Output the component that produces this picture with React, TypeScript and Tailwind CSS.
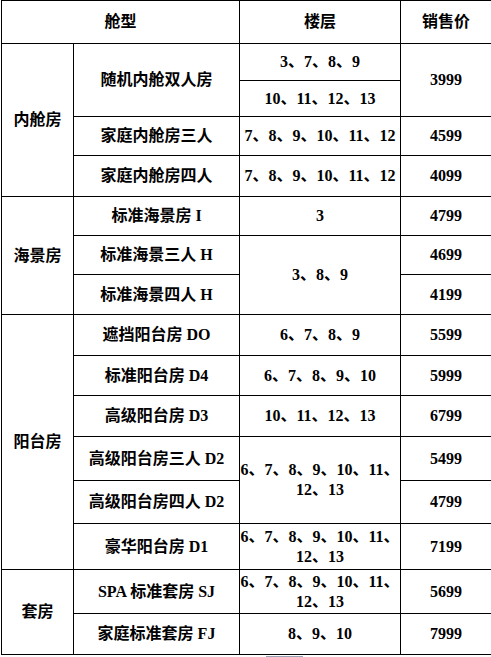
import React from 'react';

const font = { fontFamily: '"Liberation Serif", "Noto Sans CJK SC", serif' };

const td = 'border border-black text-center align-middle p-0 font-bold text-[16px] leading-[20px] text-black';

export default function App() {
  return (
    <div className="bg-white w-[491px] h-[657px] overflow-hidden" style={font}>
      <table className="border-collapse table-fixed w-[490px] ml-[1px]">
        <colgroup>
          <col className="w-[72px]" />
          <col className="w-[166px]" />
          <col className="w-[161px]" />
          <col className="w-[91px]" />
        </colgroup>
        <tbody>
          <tr className="h-[43px]">
            <td className={td} colSpan={2}>舱型</td>
            <td className={td}>楼层</td>
            <td className={td}>销售价</td>
          </tr>

          {/* 内舱房 */}
          <tr className="h-[37px]">
            <td className={td} rowSpan={4}>内舱房</td>
            <td className={td} rowSpan={2}>随机内舱双人房</td>
            <td className={td}>3、7、8、9</td>
            <td className={td} rowSpan={2}>3999</td>
          </tr>
          <tr className="h-[36px]">
            <td className={td}>10、11、12、13</td>
          </tr>
          <tr className="h-[39px]">
            <td className={td}>家庭内舱房三人</td>
            <td className={td}>7、8、9、10、11、12</td>
            <td className={td}>4599</td>
          </tr>
          <tr className="h-[41px]">
            <td className={td}>家庭内舱房四人</td>
            <td className={td}>7、8、9、10、11、12</td>
            <td className={td}>4099</td>
          </tr>

          {/* 海景房 */}
          <tr className="h-[39px]">
            <td className={td} rowSpan={3}>海景房</td>
            <td className={td}>标准海景房 I</td>
            <td className={td}>3</td>
            <td className={td}>4799</td>
          </tr>
          <tr className="h-[39px]">
            <td className={td}>标准海景三人 H</td>
            <td className={td} rowSpan={2}>3、8、9</td>
            <td className={td}>4699</td>
          </tr>
          <tr className="h-[40px]">
            <td className={td}>标准海景四人 H</td>
            <td className={td}>4199</td>
          </tr>

          {/* 阳台房 */}
          <tr className="h-[41px]">
            <td className={td} rowSpan={6}>阳台房</td>
            <td className={td}>遮挡阳台房 DO</td>
            <td className={td}>6、7、8、9</td>
            <td className={td}>5599</td>
          </tr>
          <tr className="h-[40px]">
            <td className={td}>标准阳台房 D4</td>
            <td className={td}>6、7、8、9、10</td>
            <td className={td}>5999</td>
          </tr>
          <tr className="h-[41px]">
            <td className={td}>高级阳台房 D3</td>
            <td className={td}>10、11、12、13</td>
            <td className={td}>6799</td>
          </tr>
          <tr className="h-[44px]">
            <td className={td}>高级阳台房三人 D2</td>
            <td className={td} rowSpan={2}>
              6、7、8、9、10、11、
              <br />
              12、13
            </td>
            <td className={td}>5499</td>
          </tr>
          <tr className="h-[43px]">
            <td className={td}>高级阳台房四人 D2</td>
            <td className={td}>4799</td>
          </tr>
          <tr className="h-[46px]">
            <td className={td}>豪华阳台房 D1</td>
            <td className={td}>
              6、7、8、9、10、11、
              <br />
              12、13
            </td>
            <td className={td}>7199</td>
          </tr>

          {/* 套房 */}
          <tr className="h-[44px]">
            <td className={td} rowSpan={2}>套房</td>
            <td className={td}>SPA 标准套房 SJ</td>
            <td className={td}>
              6、7、8、9、10、11、
              <br />
              12、13
            </td>
            <td className={td}>5699</td>
          </tr>
          <tr className="h-[41px]">
            <td className={td}>家庭标准套房 FJ</td>
            <td className={td}>8、9、10</td>
            <td className={td}>7999</td>
          </tr>
        </tbody>
      </table>
      <div className="ml-[266px] mt-[1px] w-[37px] h-[3px] bg-[#9aa3b5]" />
    </div>
  );
}
